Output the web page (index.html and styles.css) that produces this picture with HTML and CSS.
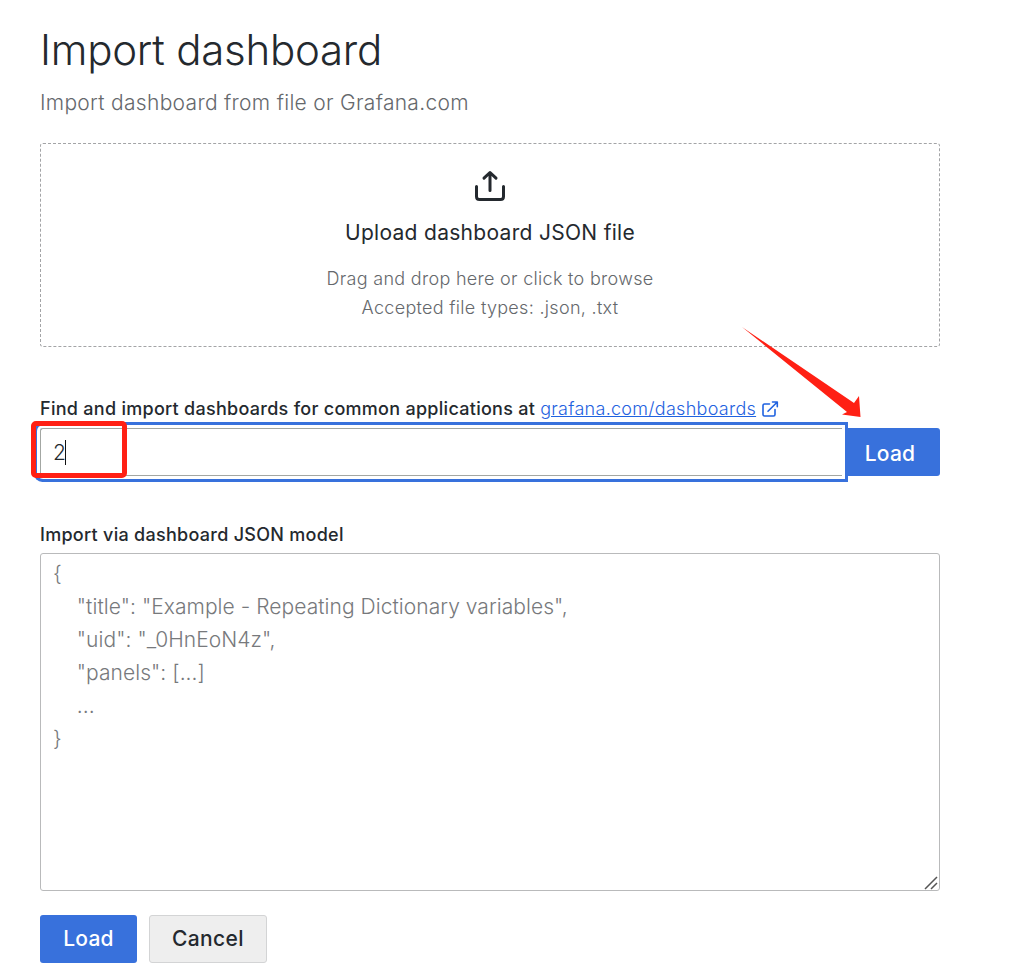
FILE: index.html
```html
<!DOCTYPE html>
<html lang="en">
<head>
<meta charset="utf-8">
<title>Import dashboard</title>
<link rel="stylesheet" href="styles.css">
</head>
<body>
<main class="page">
  <h1 class="title">Import dashboard</h1>
  <p class="subtitle">Import dashboard from file or Grafana.com</p>

  <section class="dropzone">
    <svg class="upload-icon" viewBox="0 0 36 36" fill="none" stroke="currentColor" stroke-width="3" stroke-linecap="round" stroke-linejoin="round">
      <path d="M4.500 18.500V28.500Q4.500 31.500 7.500 31.500H28.500Q31.500 31.500 31.500 28.500V18.500M18 22.500V4.500M12 10.200L18 4.500L24 10.200"/>
    </svg>
    <div class="drop-title">Upload dashboard JSON file</div>
    <small class="drop-hint">Drag and drop here or click to browse<br><span class="types">Accepted file types: .json, .txt</span></small>
  </section>

  <div class="label find-label"><span class="find-text">Find and import dashboards for common applications at</span><a class="link">grafana.com/dashboards</a>
    <svg class="external-icon" viewBox="0 0 18 18" fill="none" stroke="currentColor" stroke-width="1.600" stroke-linecap="round" stroke-linejoin="round">
      <path d="M8.500 4H3.500Q2 4 2 5.500V14.500Q2 16 3.500 16H12.500Q14 16 14 14.500V9.500M11.500 2H16.300V6.800M16.300 2L7 11.300"/>
    </svg>
  </div>
  <div class="import-row">
    <div class="input"><span class="value">2</span><span class="caret"></span></div>
    <button class="button primary attached">Load</button>
    <div class="highlight"></div>
    <svg class="arrow" viewBox="0 0 122 94"><path d="M1 1L113 77L118 70L119.500 91L101 88.500L106 86Z"/></svg>
  </div>

  <div class="label model-label">Import via dashboard JSON model</div>
  <div class="textarea"><pre class="placeholder">{
    "title": "Example - Repeating Dictionary variables",
    "uid": "_0HnEoN4z",
    "panels": [...]
    ...
}</pre>
    <svg class="grip" viewBox="0 0 14 14"><path d="M1 13L13 1M7 13L13 7"/></svg>
  </div>

  <div class="actions">
    <button class="button primary submit">Load</button>
    <button class="button secondary">Cancel</button>
  </div>
</main>
</body>
</html>
```
FILE: styles.css
```css
* { box-sizing: border-box; }
body {
  margin: 0;
  background: #fff;
  color: #24292e;
  font: 350 21px/33px Inter, "Liberation Sans", sans-serif;
  letter-spacing: 0.3px;
}
.page { width: 940px; padding: 24px 0 0 40px; }
.title { margin: 0; font-size: 42px; line-height: 51px; font-weight: 350; letter-spacing: -0.25px; }
.subtitle { margin: 11px 0 24px; color: #65686c; }
.dropzone {
  height: 204px;
  padding: 24px 0 0;
  border: 1px dashed #a3a4a6;
  border-radius: 3px;
  display: flex;
  flex-direction: column;
  align-items: center;
}
.upload-icon { width: 36px; height: 36px; }
.drop-title { margin-top: 12px; font-weight: 400; letter-spacing: 0.3px; }
.drop-hint { margin-top: 15px; font-size: 18px; line-height: 29px; color: #65686c; text-align: center; letter-spacing: 0.3px; }
.label { font-size: 18px; line-height: 22px; font-weight: 450; letter-spacing: 0.28px; }
.find-label { margin-top: 51px; display: flex; align-items: center; }
.link { margin-left: 5px; color: #1f62e0; font-weight: 350; text-decoration: underline; }
.external-icon { width: 18px; height: 18px; margin-left: 5px; color: #1f62e0; }
.import-row { position: relative; display: flex; margin-top: 8px; height: 48px; }
.input {
  width: 802px;
  border: 1px solid #a3a7a3;
  border-right: 0;
  border-radius: 3px 0 0 3px;
  padding: 0 12px;
  display: flex;
  align-items: center;
  box-shadow: 0 0 0 3px #fff, 0 0 0 6px #3871dc;
  clip-path: inset(-6px);
}
.value { letter-spacing: -0.5px; }
.caret { width: 1px; height: 25px; background: #111; }
.button {
  height: 48px;
  padding: 0;
  border: 0;
  border-radius: 3px;
  font: 500 21px/48px Inter, "Liberation Sans", sans-serif;
  letter-spacing: 0.225px;
}
.primary { background: #3871dc; color: #fff; }
.attached { width: 98px; border-radius: 0 3px 3px 0; padding: 2px 2px 0 0; }
.highlight {
  position: absolute;
  left: -9px;
  top: -7px;
  width: 96px;
  height: 57px;
  border: 5px solid #ff2014;
  border-radius: 5px;
}
.arrow { position: absolute; left: 701px; top: -102px; width: 122px; height: 94px; fill: #ff2014; }
.model-label { margin-top: 48px; }
.textarea {
  position: relative;
  height: 338px;
  margin-top: 7px;
  padding: 3px 12px;
  border: 1px solid #b9babb;
  border-radius: 3px;
}
.placeholder { margin: 0; font: inherit; color: #77797c; letter-spacing: 0.05px; }
.grip { position: absolute; right: 1px; bottom: 0; width: 14px; height: 14px; fill: none; stroke: #555; stroke-width: 1.5; }
.actions { display: flex; gap: 12px; margin-top: 24px; }
.submit { width: 97px; }
.secondary { width: 118px; border: 1px solid #d3d4d5; background: #eee; color: #24292e; line-height: 46px; font-weight: 450; letter-spacing: 0.35px; }
```
